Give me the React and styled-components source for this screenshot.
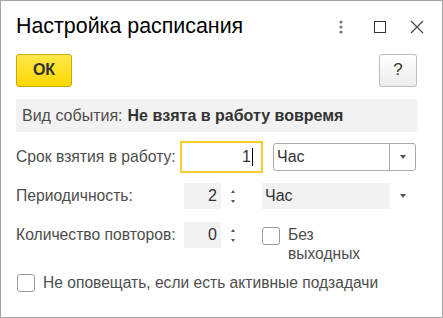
import React from "react";
import styled, { createGlobalStyle } from "styled-components";

const Global = createGlobalStyle`
  html, body { margin: 0; padding: 0; background: #fff; }
  body { font-family: "Liberation Sans", Arial, sans-serif; }
  * { box-sizing: border-box; }
`;

const Window = styled.div`
  width: 443px;
  height: 318px;
  border: 1px solid #a5a5a5;
  background: #fff;
  padding: 0 25px 0 15px;
  display: flex;
  flex-direction: column;
`;

const TitleBar = styled.div`
  display: flex;
  align-items: center;
  height: 51px;
`;

const Title = styled.h1`
  margin: 0;
  flex: 1;
  font-size: 21.4px;
  font-weight: normal;
  color: #000;
`;

const TitleIcons = styled.div`
  display: flex;
  align-items: center;
  gap: ${(p) => p.$gap || 0}px;
  margin-right: -10px;
`;

const IconBtn = styled.div`
  width: 20px;
  height: 24px;
  margin-left: ${(p) => p.$ml || 0}px;
  display: flex;
  align-items: center;
  justify-content: center;
`;

const Toolbar = styled.div`
  display: flex;
  justify-content: space-between;
  align-items: center;
  height: 34px;
  margin-top: 1px;
`;

const OkButton = styled.button`
  width: 56px;
  height: 33px;
  border: 1px solid #c7ab00;
  border-radius: 3px;
  background: linear-gradient(#ffe84a, #fad800);
  font-family: inherit;
  font-weight: bold;
  font-size: 16px;
  color: #333;
  padding: 0;
`;

const HelpButton = styled.button`
  width: 38px;
  height: 33px;
  border: 1px solid #bcbcbc;
  border-radius: 3px;
  background: linear-gradient(#ffffff, #ececec);
  font-family: inherit;
  font-size: 17px;
  color: #333;
  padding: 0;
`;

const InfoBar = styled.div`
  margin-top: 12px;
  height: 33px;
  background: #f2f2f2;
  display: flex;
  align-items: center;
  padding-left: 6px;
  font-size: 16px;
  color: #4d4d4d;
`;

const Strong = styled.b`
  color: #333;
  margin-left: 5px;
`;

const Row = styled.div`
  display: flex;
  align-items: ${(p) => p.$align || "center"};
  margin-top: ${(p) => p.$mt || 0}px;
`;

const Label = styled.div`
  width: ${(p) => p.$w}px;
  font-size: 15.7px;
  line-height: ${(p) => p.$lh || "normal"};
  color: #4d4d4d;
  white-space: nowrap;
`;

const FocusInput = styled.div`
  width: 83px;
  height: 32px;
  border: 2px solid #fbcb2d;
  display: flex;
  align-items: center;
  justify-content: flex-end;
  padding-right: 8px;
  font-size: 16px;
  color: #333;
`;

const Caret = styled.span`
  display: inline-block;
  width: 1px;
  height: 18px;
  background: #000;
  margin-left: 1px;
`;

const Select = styled.div`
  margin-left: 10px;
  width: 143px;
  height: 28px;
  border: 1px solid #aaa;
  border-radius: 3px;
  display: flex;
  align-items: center;
  font-size: 16px;
  color: #333;
`;

const SelectText = styled.div`
  flex: 1;
  padding-left: 3px;
`;

const SelectBtn = styled.div`
  width: 26px;
  height: 100%;
  border-left: 1px solid #aaa;
  display: flex;
  align-items: center;
  justify-content: center;
`;

const Arrow = styled.div`
  width: 0;
  height: 0;
  border-left: 3.5px solid transparent;
  border-right: 3.5px solid transparent;
  border-top: 4px solid #555;
`;

const NumBox = styled.div`
  width: 37px;
  height: 26px;
  background: #f2f2f2;
  display: flex;
  align-items: center;
  justify-content: flex-end;
  padding-right: 4px;
  font-size: 16px;
  color: #333;
`;

const Spin = styled.div`
  width: 24px;
  height: 26px;
  display: flex;
  flex-direction: column;
  align-items: center;
  justify-content: center;
  gap: 7px;
  margin-right: 17px;
`;

const Tri = styled.div`
  width: 0;
  height: 0;
  border-left: 2.5px solid transparent;
  border-right: 2.5px solid transparent;
  ${(p) =>
    p.$up ? "border-bottom: 3px solid #555;" : "border-top: 3px solid #555;"}
`;

const FlatSelect = styled.div`
  width: 128px;
  height: 26px;
  background: #f2f2f2;
  display: flex;
  align-items: center;
  padding-left: 3px;
  font-size: 16px;
  color: #333;
`;

const FlatArrow = styled.div`
  width: 26px;
  display: flex;
  justify-content: center;
`;

const Check = styled.div`
  width: 18px;
  height: 18px;
  border: 1px solid #9a9a9a;
  border-radius: 3px;
  background: #fff;
  flex: none;
  margin-top: ${(p) => p.$mt || 0}px;
  margin-left: ${(p) => p.$ml || 0}px;
`;

const CheckLabel = styled.div`
  font-size: 15.6px;
  color: #4d4d4d;
  line-height: 19px;
  margin-left: 8px;
  margin-top: ${(p) => p.$mt || 0}px;
  width: ${(p) => (p.$w ? p.$w + "px" : "auto")};
`;

export default function App() {
  return (
    <>
      <Global />
      <Window>
        <TitleBar>
          <Title>Настройка расписания</Title>
          <TitleIcons>
            <IconBtn>
              <svg width="4" height="14" viewBox="0 0 4 14">
                <circle cx="2" cy="2" r="1.6" fill="#777" />
                <circle cx="2" cy="7" r="1.6" fill="#777" />
                <circle cx="2" cy="12" r="1.6" fill="#777" />
              </svg>
            </IconBtn>
            <IconBtn $ml={19}>
              <svg width="12" height="12" viewBox="0 0 12 12">
                <rect x="0.5" y="0.5" width="11" height="11" fill="none" stroke="#333" />
              </svg>
            </IconBtn>
            <IconBtn $ml={17}>
              <svg width="14" height="14" viewBox="0 0 14 14">
                <path d="M1 1 L13 13 M13 1 L1 13" stroke="#444" strokeWidth="1.2" />
              </svg>
            </IconBtn>
          </TitleIcons>
        </TitleBar>
        <Toolbar>
          <OkButton>ОК</OkButton>
          <HelpButton>?</HelpButton>
        </Toolbar>
        <InfoBar>
          Вид события:<Strong>Не взята в работу вовремя</Strong>
        </InfoBar>
        <Row $mt={9}>
          <Label $w={164}>Срок взятия в работу:</Label>
          <FocusInput>
            1<Caret />
          </FocusInput>
          <Select>
            <SelectText>Час</SelectText>
            <SelectBtn>
              <Arrow />
            </SelectBtn>
          </Select>
        </Row>
        <Row $mt={10}>
          <Label $w={168}>Периодичность:</Label>
          <NumBox>2</NumBox>
          <Spin>
            <Tri $up />
            <Tri />
          </Spin>
          <FlatSelect>Час</FlatSelect>
          <FlatArrow>
            <Arrow />
          </FlatArrow>
        </Row>
        <Row $mt={13} $align="flex-start">
          <Label $w={168} $lh="26px">Количество повторов:</Label>
          <NumBox>0</NumBox>
          <Spin>
            <Tri $up />
            <Tri />
          </Spin>
          <Check $mt={5} />
          <CheckLabel $w={90} $mt={3}>Без выходных</CheckLabel>
        </Row>
        <Row $mt={10}>
          <Check $ml={1} />
          <CheckLabel>Не оповещать, если есть активные подзадачи</CheckLabel>
        </Row>
      </Window>
    </>
  );
}
